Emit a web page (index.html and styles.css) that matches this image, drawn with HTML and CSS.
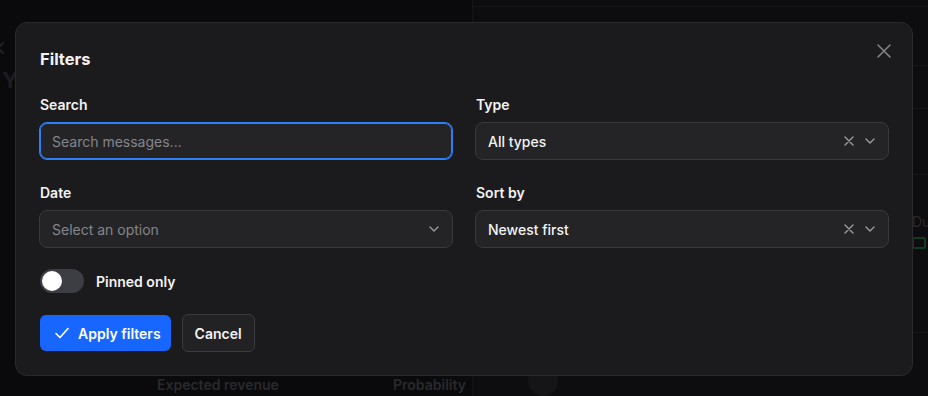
FILE: index.html
```html
<!DOCTYPE html>
<html lang="en">
<head>
    <meta charset="UTF-8">
    <meta name="viewport" content="width=device-width, initial-scale=1.0">
    <title>Filters</title>
    <link rel="stylesheet" href="styles.css">
</head>
<body>
    <!-- dimmed page behind the dialog -->
    <div class="page">
        <div class="main">
            <svg class="back" width="8" height="12" viewBox="0 0 8 12" fill="none" stroke="currentColor" stroke-width="2" stroke-linecap="round"><path d="M6 1L1 6l5 5"/></svg>
            <div class="page-title">Your deals</div>
            <div class="table-head">
                <span>Expected revenue</span>
                <span>Probability</span>
            </div>
        </div>
        <div class="side">
            <div class="side-row short"></div>
            <div class="side-row tall"></div>
            <div class="side-row mid"></div>
            <div class="side-row mid2"></div>
            <div class="side-row big">
                <span class="due">Due</span>
                <span class="cal"></span>
            </div>
            <div class="side-row foot">
                <span class="avatar"></span>
            </div>
        </div>
    </div>

    <div class="dialog">
        <button class="close" type="button" aria-label="Close">
            <svg width="14" height="14" viewBox="0 0 14 14" fill="none" stroke="currentColor" stroke-width="1.5" stroke-linecap="round">
                <path d="M1 1l12 12M13 1L1 13"/>
            </svg>
        </button>

        <h2 class="dialog-title">Filters</h2>

        <form class="filters">
            <div class="form-group">
                <label for="search">Search</label>
                <input class="field focused" type="text" id="search" placeholder="Search messages...">
            </div>

            <div class="form-group">
                <label>Type</label>
                <div class="field select">
                    <span class="value">All types</span>
                    <span class="icons">
                        <svg width="10" height="10" viewBox="0 0 10 10" fill="none" stroke="currentColor" stroke-width="1.4" stroke-linecap="round"><path d="M1 1l8 8M9 1L1 9"/></svg>
                        <svg width="10" height="6" viewBox="0 0 10 6" fill="none" stroke="currentColor" stroke-width="1.4" stroke-linecap="round" stroke-linejoin="round"><path d="M1 1l4 4 4-4"/></svg>
                    </span>
                </div>
            </div>

            <div class="form-group">
                <label>Date</label>
                <div class="field select">
                    <span class="value placeholder">Select an option</span>
                    <span class="icons">
                        <svg width="10" height="6" viewBox="0 0 10 6" fill="none" stroke="currentColor" stroke-width="1.4" stroke-linecap="round" stroke-linejoin="round"><path d="M1 1l4 4 4-4"/></svg>
                    </span>
                </div>
            </div>

            <div class="form-group">
                <label>Sort by</label>
                <div class="field select">
                    <span class="value">Newest first</span>
                    <span class="icons">
                        <svg width="10" height="10" viewBox="0 0 10 10" fill="none" stroke="currentColor" stroke-width="1.4" stroke-linecap="round"><path d="M1 1l8 8M9 1L1 9"/></svg>
                        <svg width="10" height="6" viewBox="0 0 10 6" fill="none" stroke="currentColor" stroke-width="1.4" stroke-linecap="round" stroke-linejoin="round"><path d="M1 1l4 4 4-4"/></svg>
                    </span>
                </div>
            </div>
        </form>

        <div class="toggle-row">
            <span class="toggle"><span class="knob"></span></span>
            <span class="toggle-label">Pinned only</span>
        </div>

        <div class="actions">
            <button class="btn primary" type="button">
                <svg width="16" height="16" viewBox="0 0 16 16" fill="none" stroke="currentColor" stroke-width="1.6" stroke-linecap="round" stroke-linejoin="round"><path d="M2 8.5l4 4 8-9"/></svg>
                Apply filters
            </button>
            <button class="btn secondary" type="button">Cancel</button>
        </div>
    </div>
</body>
</html>
```

FILE: styles.css
```css
* {
    box-sizing: border-box;
}
body {
    margin: 0;
    width: 928px;
    height: 396px;
    overflow: hidden;
    background: #0a0a0c;
    font-family: Inter, "Noto Sans", sans-serif;
    color: #f2f2f4;
}

/* background page */
.page {
    display: flex;
    height: 396px;
}
.main {
    width: 473px;
    flex-shrink: 0;
    border-right: 1px solid #141417;
    display: flex;
    flex-direction: column;
}
.back {
    color: #222226;
    margin: 42px 0 0 -3px;
}
.page-title {
    color: #1d1d21;
    font-size: 22px;
    line-height: 18px;
    font-weight: 700;
    margin: 17px 0 0 2px;
    white-space: nowrap;
}
.table-head {
    margin-top: auto;
    display: flex;
    justify-content: space-between;
    padding: 0 6px 3px 157px;
    color: #29292d;
    font-size: 14px;
    font-weight: 600;
}
.side {
    flex: 1;
    min-width: 0;
    overflow: hidden;
    background: #0d0d0f;
    display: flex;
    flex-direction: column;
}
.side-row {
    border-bottom: 1px solid #17171a;
}
.side-row.short { height: 7px; }
.side-row.tall { height: 63px; }
.side-row.mid { height: 45px; }
.side-row.mid2 { height: 70px; }
.side-row.big {
    height: 165px;
    padding: 40px 0 0 439px;
}
.due {
    display: block;
    color: #2a2a2e;
    font-size: 14px;
    line-height: 14px;
}
.cal {
    display: block;
    width: 14px;
    height: 12px;
    margin-top: 8px;
    border: 2px solid #123a20;
    border-radius: 2px;
}
.side-row.foot {
    flex: 1;
    border: 0;
    padding: 33px 0 0 55px;
}
.avatar {
    display: block;
    width: 30px;
    height: 30px;
    border-radius: 50%;
    background: #151518;
}

/* dialog */
.dialog {
    position: absolute;
    left: 15px;
    top: 22px;
    width: 898px;
    padding: 23px;
    background: #1b1b1d;
    border: 1px solid #2a2a2e;
    border-radius: 12px;
}
.close {
    position: absolute;
    top: 21px;
    right: 21px;
    width: 14px;
    height: 14px;
    padding: 0;
    border: 0;
    background: none;
    color: #85858c;
    display: flex;
}
.dialog-title {
    margin: 1px 0 24px;
    font-size: 16.5px;
    line-height: 24px;
    font-weight: 700;
    padding-left: 1px;
}
.filters {
    display: grid;
    grid-template-columns: 1fr 1fr;
    column-gap: 22px;
    row-gap: 23px;
}
.form-group label {
    display: block;
    font-size: 14px;
    line-height: 20px;
    font-weight: 600;
    margin-bottom: 7px;
    padding-left: 1px;
}
.field {
    width: 100%;
    height: 38px;
    padding: 0 12px;
    background: #242427;
    border: 1px solid #38383d;
    border-radius: 8px;
    font-family: inherit;
    font-size: 14px;
    color: #f2f2f4;
    outline: none;
}
.field.focused {
    border-color: #2d7ff9;
    box-shadow: inset 0 0 0 1px #2d7ff9;
}
.field::placeholder,
.placeholder {
    color: #85858c;
}
.select {
    display: flex;
    align-items: center;
    justify-content: space-between;
    font-weight: 500;
}
.placeholder {
    font-weight: 400;
}
.icons {
    display: flex;
    align-items: center;
    gap: 11px;
    color: #9a9aa1;
    padding-right: 1px;
}

.toggle-row {
    display: flex;
    align-items: center;
    gap: 12px;
    margin-top: 21px;
    padding-left: 1px;
}
.toggle {
    width: 44px;
    height: 24px;
    border-radius: 12px;
    background: #3d3d44;
    padding: 2px;
    display: flex;
}
.knob {
    width: 20px;
    height: 20px;
    border-radius: 50%;
    background: #fff;
}
.toggle-label {
    font-size: 14px;
    font-weight: 600;
}

.actions {
    display: flex;
    align-items: center;
    gap: 11px;
    margin-top: 21px;
    padding-left: 1px;
}
.btn {
    font-family: inherit;
    font-size: 14px;
    font-weight: 600;
    border-radius: 6px;
    display: flex;
    align-items: center;
    cursor: pointer;
}
.primary {
    height: 36px;
    padding: 0 10px 0 14px;
    gap: 8px;
    background: #1766ff;
    color: #fff;
    border: 0;
}
.secondary {
    height: 38px;
    padding: 0 12px;
    background: #222225;
    color: #f2f2f4;
    border: 1px solid #3a3a3f;
}
```
